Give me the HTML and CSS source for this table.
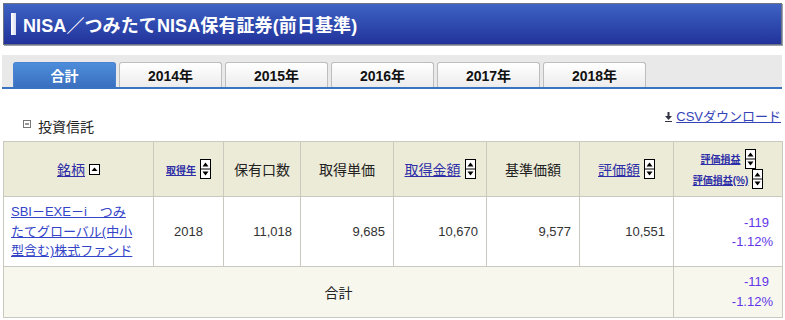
FILE: index.html
```html
<!DOCTYPE html>
<html lang="ja">
<head>
<meta charset="utf-8">
<title>NISA保有証券</title>
<link rel="stylesheet" href="styles.css">
</head>
<body>
<div class="page">
  <div class="titlebar">
    <span class="title-mark"></span>
    <h1 class="title-text">NISA／つみたてNISA保有証券(前日基準)</h1>
  </div>

  <div class="tabstrip">
    <div class="tab tab-active">合計</div>
    <div class="tab">2014年</div>
    <div class="tab">2015年</div>
    <div class="tab">2016年</div>
    <div class="tab">2017年</div>
    <div class="tab">2018年</div>
  </div>

  <div class="section-head">
    <div class="section-title">
      <svg class="toggle-icon" width="8" height="8" viewBox="0 0 8 8"><rect x="0.5" y="0.5" width="7" height="7" fill="#fff" stroke="#777"/><line x1="2" y1="4" x2="6" y2="4" stroke="#333"/></svg>
      <span>投資信託</span>
    </div>
    <a class="csv-link" href="#"><svg class="dl-icon" width="7" height="10" viewBox="0 0 7 10"><rect x="2.5" y="0" width="2" height="4" fill="#334"/><path d="M0 4 L7 4 L3.5 8 Z" fill="#334"/><rect x="0" y="9" width="7" height="1" fill="#334"/></svg>CSVダウンロード</a>
  </div>

  <table class="holdings">
    <colgroup>
      <col class="c-name"><col class="c-year"><col class="c-qty"><col class="c-unit">
      <col class="c-cost"><col class="c-base"><col class="c-val"><col class="c-pl">
    </colgroup>
    <thead>
      <tr>
        <th><a href="#" class="hlink">銘柄</a><svg class="sort-up" width="11" height="11" viewBox="0 0 11 11"><rect x="0.5" y="0.5" width="10" height="10" fill="#fff" stroke="#000"/><path d="M2.5 7 L8.5 7 L5.5 3.5 Z" fill="#000"/></svg></th>
        <th><a href="#" class="hlink small">取得年</a><svg class="sort" width="11" height="20" viewBox="0 0 11 20"><rect x="0.5" y="0.5" width="10" height="19" fill="#fff" stroke="#000"/><line x1="0" y1="10" x2="11" y2="10" stroke="#000"/><path d="M2.5 7.5 L8.5 7.5 L5.5 3.5 Z" fill="#000"/><path d="M2.5 12.5 L8.5 12.5 L5.5 16.5 Z" fill="#000"/></svg></th>
        <th>保有口数</th>
        <th>取得単価</th>
        <th><a href="#" class="hlink">取得金額</a><svg class="sort" width="11" height="20" viewBox="0 0 11 20"><rect x="0.5" y="0.5" width="10" height="19" fill="#fff" stroke="#000"/><line x1="0" y1="10" x2="11" y2="10" stroke="#000"/><path d="M2.5 7.5 L8.5 7.5 L5.5 3.5 Z" fill="#000"/><path d="M2.5 12.5 L8.5 12.5 L5.5 16.5 Z" fill="#000"/></svg></th>
        <th>基準価額</th>
        <th><a href="#" class="hlink">評価額</a><svg class="sort" width="11" height="20" viewBox="0 0 11 20"><rect x="0.5" y="0.5" width="10" height="19" fill="#fff" stroke="#000"/><line x1="0" y1="10" x2="11" y2="10" stroke="#000"/><path d="M2.5 7.5 L8.5 7.5 L5.5 3.5 Z" fill="#000"/><path d="M2.5 12.5 L8.5 12.5 L5.5 16.5 Z" fill="#000"/></svg></th>
        <th class="pl-head">
          <div class="pl-line"><a href="#" class="hlink small">評価損益</a><svg class="sort" width="11" height="20" viewBox="0 0 11 20"><rect x="0.5" y="0.5" width="10" height="19" fill="#fff" stroke="#000"/><line x1="0" y1="10" x2="11" y2="10" stroke="#000"/><path d="M2.5 7.5 L8.5 7.5 L5.5 3.5 Z" fill="#000"/><path d="M2.5 12.5 L8.5 12.5 L5.5 16.5 Z" fill="#000"/></svg></div>
          <div class="pl-line"><a href="#" class="hlink small">評価損益(%)</a><svg class="sort" width="11" height="20" viewBox="0 0 11 20"><rect x="0.5" y="0.5" width="10" height="19" fill="#fff" stroke="#000"/><line x1="0" y1="10" x2="11" y2="10" stroke="#000"/><path d="M2.5 7.5 L8.5 7.5 L5.5 3.5 Z" fill="#000"/><path d="M2.5 12.5 L8.5 12.5 L5.5 16.5 Z" fill="#000"/></svg></div>
        </th>
      </tr>
    </thead>
    <tbody>
      <tr class="data-row">
        <td class="name"><a href="#" class="fund-link">SBI－EXE－i　つみたてグローバル(中小型含む)株式ファンド</a></td>
        <td class="center">2018</td>
        <td class="num">11,018</td>
        <td class="num">9,685</td>
        <td class="num">10,670</td>
        <td class="num">9,577</td>
        <td class="num">10,551</td>
        <td class="num pl"><span class="pl-amt">-119</span><span class="pl-pct">-1.12%</span></td>
      </tr>
      <tr class="total-row">
        <td colspan="7" class="total-label">合計</td>
        <td class="num pl"><span class="pl-amt">-119</span><span class="pl-pct">-1.12%</span></td>
      </tr>
    </tbody>
  </table>
</div>
</body>
</html>
```

FILE: styles.css
```css
* { box-sizing: border-box; }
html, body { margin: 0; padding: 0; background: #fff; }
body {
  font-family: "Liberation Sans", "Noto Sans CJK JP", sans-serif;
  color: #333;
}
.page { padding: 3px 3px 0 3px; width: 785px; }

.titlebar {
  display: flex;
  align-items: center;
  width: 779px;
  height: 42px;
  border: 1px solid #6d7384;
  box-shadow: 1px 1px 0 #9aa0ad;
  background: linear-gradient(#3d63c4, #22339b);
  padding-left: 7px;
}
.title-mark {
  width: 5px;
  height: 22px;
  background: linear-gradient(90deg, #ffffff, #d8dcf0);
  margin-right: 7px;
}
.title-text {
  margin: 0;
  font-size: 18px;
  font-weight: bold;
  color: #fff;
  letter-spacing: 0.1px;
}

.tabstrip {
  display: flex;
  gap: 3px;
  margin: 10px 0 0 -1px;
  width: 780px;
  height: 34px;
  background: #e9e9e9;
  border-bottom: 2px solid #3a73bf;
  padding: 7px 0 0 11px;
}
.tab {
  width: 103px;
  height: 25px;
  border: 1px solid #bdbdbd;
  border-bottom: none;
  border-radius: 3px 3px 0 0;
  background: linear-gradient(#ffffff, #ececec);
  font-size: 14px;
  font-weight: bold;
  color: #111;
  display: flex;
  align-items: center;
  justify-content: center;
}
.tab-active {
  background: linear-gradient(#4d8ddb, #3a70bf);
  border-color: #4a82cf;
  color: #fff;
}

.section-head {
  display: flex;
  justify-content: space-between;
  align-items: flex-start;
  margin-top: 19px;
  height: 33px;
}
.section-title {
  display: flex;
  align-items: center;
  gap: 7px;
  padding: 10px 0 0 20px;
  font-size: 14px;
  line-height: 18px;
  color: #222;
}
.toggle-icon { margin-top: -6px; }
.csv-link {
  display: flex;
  align-items: center;
  gap: 4px;
  font-size: 13px;
  line-height: 18px;
  color: #3444b8;
  text-decoration: underline;
  margin-right: 1px;
}

.holdings {
  width: 779px;
  border-collapse: collapse;
  table-layout: fixed;
  border: 1px solid #c9c9bf;
  margin-top: 0;
}
.c-name { width: 150px; }
.c-year { width: 70px; }
.c-qty { width: 77px; }
.c-unit { width: 93px; }
.c-cost { width: 93px; }
.c-base { width: 93px; }
.c-val { width: 94px; }
.c-pl { width: 109px; }

.holdings th, .holdings td {
  border: 1px solid #c9c9bf;
  padding: 0;
}
.holdings th {
  background: #ecebd7;
  height: 55px;
  font-size: 14px;
  font-weight: normal;
  color: #222;
  text-align: center;
  vertical-align: middle;
  white-space: nowrap;
}
.holdings th svg { vertical-align: middle; margin-left: 4px; }
.hlink { color: #2e2ea8; text-decoration: underline; vertical-align: middle; }
.hlink.small { font-size: 10px; font-weight: bold; }
.pl-line { display: flex; align-items: center; justify-content: center; height: 20.5px; }
.pl-line svg { margin-left: 4px; }

.data-row td { height: 70px; background: #fff; }
.holdings td {
  font-size: 13px;
  color: #333;
  vertical-align: middle;
}
.name { padding: 0 15px 0 7px !important; line-height: 19.5px; }
.fund-link { color: #3344c8; text-decoration: underline; }
.center { text-align: center; }
.num { text-align: right; padding-right: 8px !important; }
.pl { padding-right: 9px !important; line-height: 19px; color: #6236e8 !important; }
.pl-amt, .pl-pct { display: block; }
.pl-amt { padding-right: 4px; }

.total-row td { height: 51px; background: #f7f7ee; }
.total-row .pl { line-height: 20px; }
.total-label { text-align: center; font-size: 14px !important; color: #222 !important; }
```
